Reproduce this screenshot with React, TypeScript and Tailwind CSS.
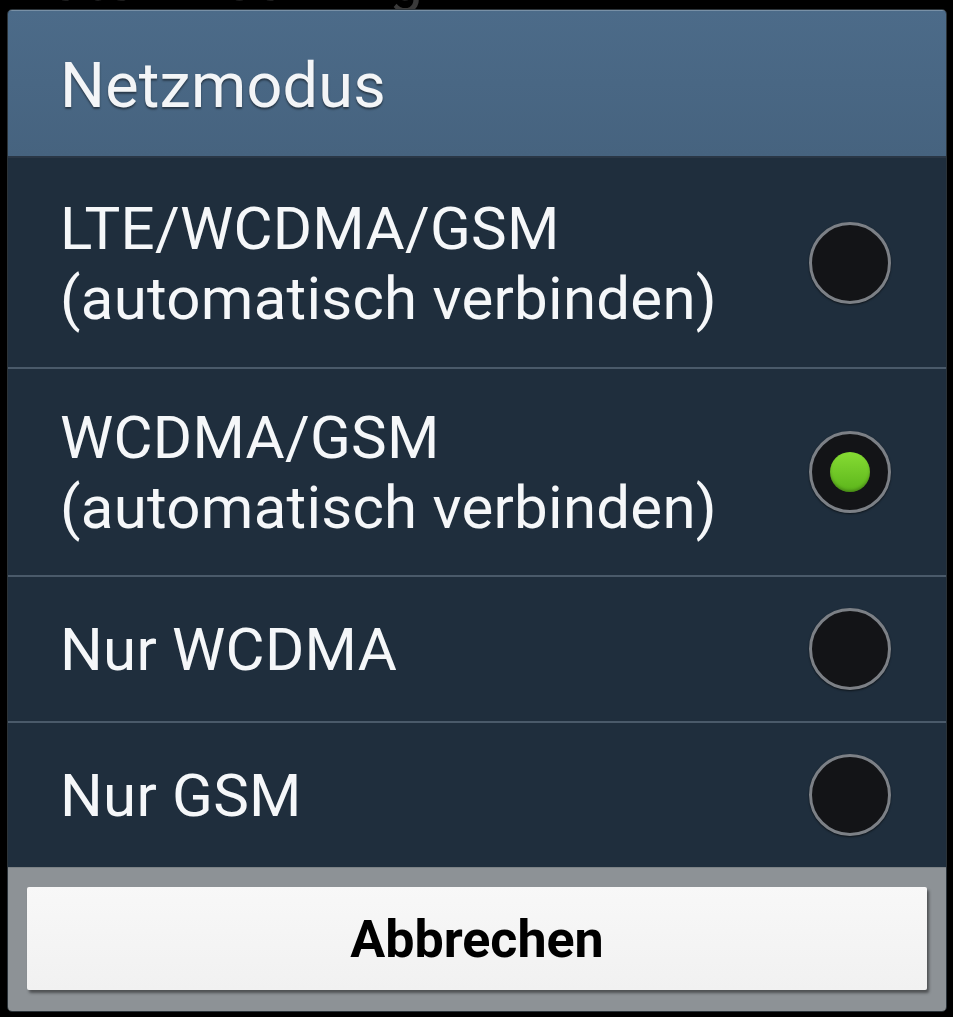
import React from 'react';

const options = [
  { id: 'lte', lines: ['LTE/WCDMA/GSM', '(automatisch verbinden)'], h: 'h-[209px]' },
  { id: 'wcdma-gsm', lines: ['WCDMA/GSM', '(automatisch verbinden)'], h: 'h-[206px]' },
  { id: 'wcdma', lines: ['Nur WCDMA'], h: 'h-[144px]' },
  { id: 'gsm', lines: ['Nur GSM'], h: 'h-[144px]' },
];

const Radio = ({ checked }: { checked: boolean }) => (
  <div className="w-[82px] h-[82px] rounded-full border-[3px] border-[#7c8086] bg-[#131417] flex items-center justify-center shadow-[0_1px_2px_rgba(0,0,0,0.6)] shrink-0">
    {checked && (
      <div className="w-[40px] h-[40px] rounded-full bg-gradient-to-b from-[#86dc33] to-[#5cb51b] shadow-[inset_0_-2px_3px_rgba(0,0,0,0.25)]" />
    )}
  </div>
);

export default function App() {
  const [selected, setSelected] = React.useState('wcdma-gsm');

  return (
    <div className="w-[953px] h-[1017px] bg-black overflow-hidden font-['Roboto','Liberation_Sans',sans-serif]">
      {/* whatever is behind the dialog, only the bottom edge shows */}
      <div className="h-[9px] overflow-hidden pl-[12px]">
        <div className="-mt-[50px] text-[60px] leading-none text-[#3a3a3a] whitespace-nowrap">Daten-Roaming</div>
      </div>

      <div className="ml-[7px] w-[940px] h-[1003px] rounded-[5px] overflow-hidden border border-[#56657280] flex flex-col">
        <div className="h-[146px] shrink-0 bg-gradient-to-b from-[#4c6b89] to-[#46637f] border-t border-[#7890a6] flex items-center pl-[52px]">
          <h1 className="text-[63px] text-[#f3f5f7] font-normal pt-[6px] tracking-[0.2px] [text-shadow:0_2px_2px_rgba(0,0,0,0.45)]">
            Netzmodus
          </h1>
        </div>
        <div className="h-[2px] shrink-0 bg-[#2a3746]" />

        <div className="bg-[#1f2e3d] flex flex-col">
          {options.map((opt, i) => (
            <React.Fragment key={opt.id}>
              {i > 0 && <div className="h-[2px] bg-[#4a5a6a]" />}
              <button
                type="button"
                onClick={() => setSelected(opt.id)}
                className={`${opt.h} flex items-center justify-between pl-[52px] pr-[55px] text-left`}
              >
                <div className="text-[60px] leading-[70px] tracking-[0.25px] text-[#f5f7f9] pt-[2px]">
                  {opt.lines.map((line) => (
                    <div key={line}>{line}</div>
                  ))}
                </div>
                <Radio checked={selected === opt.id} />
              </button>
            </React.Fragment>
          ))}
        </div>

        <div className="flex-1 bg-[#8d9296] border-t border-[#7c8286] px-[19px] pt-[19px]">
          <button
            type="button"
            className="w-full h-[103px] bg-gradient-to-b from-[#f8f8f8] to-[#f1f1f1] rounded-[2px] shadow-[2px_3px_3px_rgba(0,0,0,0.45)] text-[52px] font-bold text-black pt-[2px]"
          >
            Abbrechen
          </button>
        </div>
      </div>
    </div>
  );
}
